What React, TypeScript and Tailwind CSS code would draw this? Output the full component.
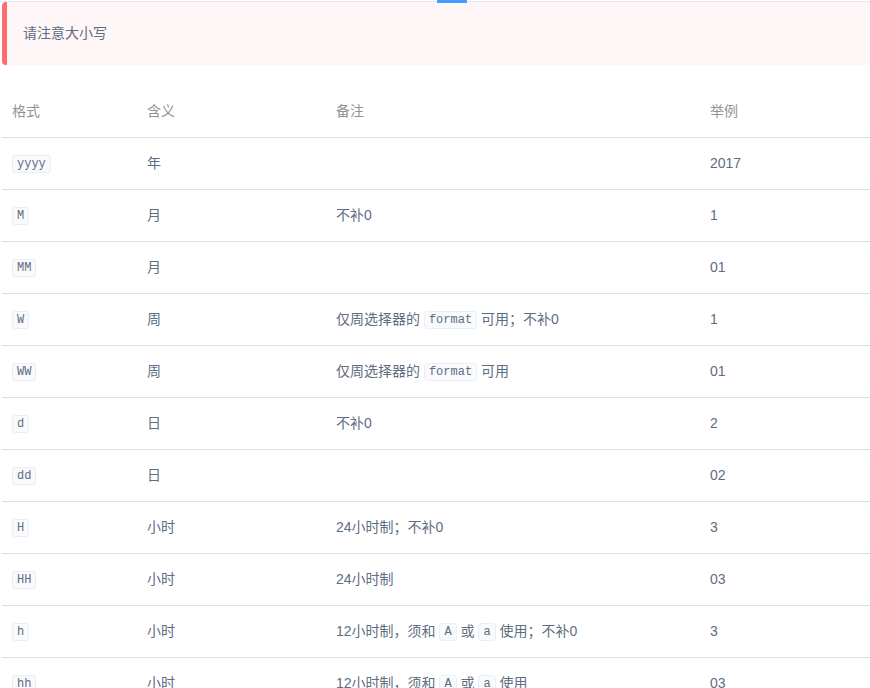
import React from "react";

const Code = ({ children }: { children: React.ReactNode }) => (
  <code
    className="inline-block rounded-[3px] border border-[#eaeefb] bg-[#f9fafc] px-[4px] text-[12px] leading-[16px] text-[#5e6d82] align-middle"
    style={{ fontFamily: '"Liberation Mono", "DejaVu Sans Mono", monospace' }}
  >
    {children}
  </code>
);

type Row = [string, string, React.ReactNode, string];

const rows: Row[] = [
  ["yyyy", "年", "", "2017"],
  ["M", "月", "不补0", "1"],
  ["MM", "月", "", "01"],
  ["W", "周", <>仅周选择器的 <Code>format</Code> 可用；不补0</>, "1"],
  ["WW", "周", <>仅周选择器的 <Code>format</Code> 可用</>, "01"],
  ["d", "日", "不补0", "2"],
  ["dd", "日", "", "02"],
  ["H", "小时", "24小时制；不补0", "3"],
  ["HH", "小时", "24小时制", "03"],
  ["h", "小时", <>12小时制，须和 <Code>A</Code> 或 <Code>a</Code> 使用；不补0</>, "3"],
  ["hh", "小时", <>12小时制，须和 <Code>A</Code> 或 <Code>a</Code> 使用</>, "03"],
];

export default function App() {
  return (
    <div
      className="w-[870px] h-[688px] overflow-hidden bg-white text-[14px] text-[#5e6d82]"
      style={{ fontFamily: '"Liberation Sans", "Noto Sans CJK SC", sans-serif' }}
    >
      <div className="relative h-[2px] border-t border-t-transparent bg-[#e4e7ed] bg-clip-padding">
        <div className="absolute left-[437px] top-[-1px] h-[3px] w-[30px] bg-[#409eff]" />
      </div>
      <div className="ml-[2px] flex h-[63px] items-center rounded-[4px] border-l-[5px] border-[#fe6c6f] bg-[#fff6f7] pl-[16px]">
        <span>请注意大小写</span>
      </div>
      <div className="ml-[2px] mt-[21px]">
        <div className="flex h-[52px] items-center border-b border-[#dcdfe6] text-[#909399]">
          <div className="w-[135px] pl-[10px]">格式</div>
          <div className="w-[189px] pl-[10px]">含义</div>
          <div className="w-[374px] pl-[10px]">备注</div>
          <div className="flex-1 pl-[10px]">举例</div>
        </div>
        {rows.map((r, i) => (
          <div key={i} className="flex h-[52px] items-center border-b border-[#dcdfe6]">
            <div className="w-[135px] pl-[10px]">
              <Code>{r[0]}</Code>
            </div>
            <div className="w-[189px] pl-[10px]">{r[1]}</div>
            <div className="w-[374px] pl-[10px]">{r[2]}</div>
            <div className="flex-1 pl-[10px]">{r[3]}</div>
          </div>
        ))}
      </div>
    </div>
  );
}
